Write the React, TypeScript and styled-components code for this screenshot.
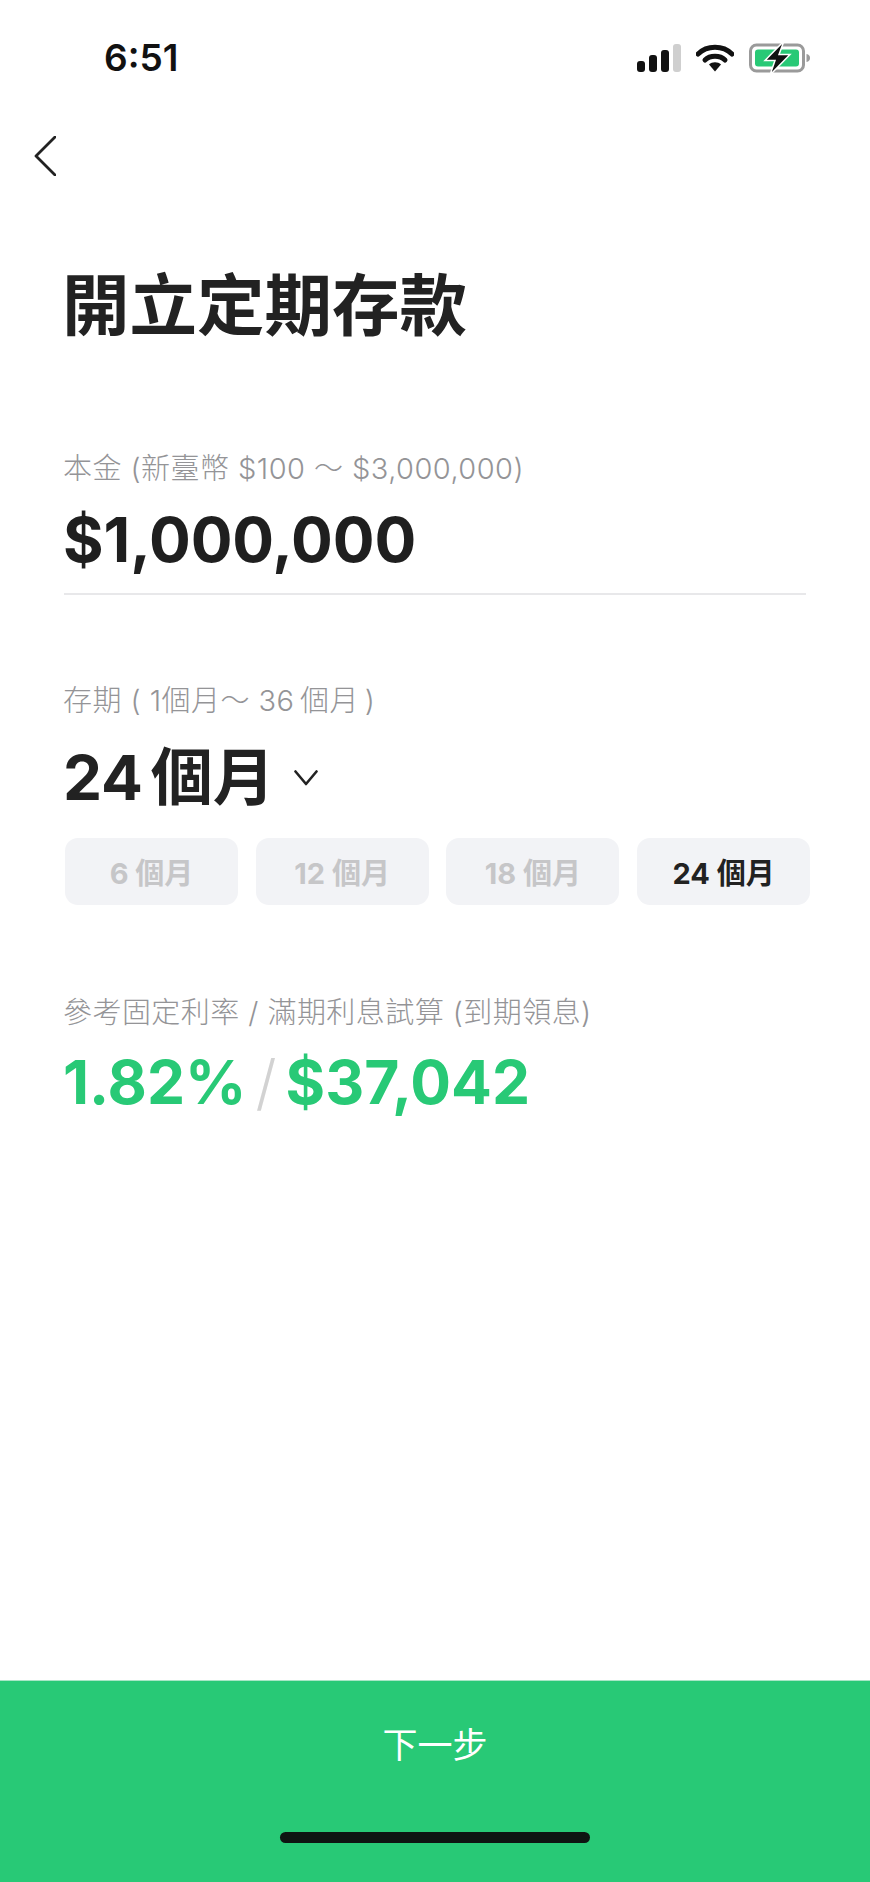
import styled, { createGlobalStyle } from "styled-components";

const GlobalStyle = createGlobalStyle`
  html, body {
    margin: 0;
    padding: 0;
    background: #fff;
  }
  * {
    box-sizing: border-box;
  }
`;

const fontStack = `Inter, "Noto Sans CJK TC", sans-serif`;

const Page = styled.div`
  width: 870px;
  height: 1882px;
  display: flex;
  flex-direction: column;
  font-family: ${fontStack};
  color: #222;
  background: #fff;
`;

const StatusBar = styled.div`
  height: 116px;
  padding: 36px 0 0 104px;
  display: flex;
  justify-content: space-between;
  align-items: flex-start;
`;

const Time = styled.div`
  font-size: 37px;
  line-height: 44px;
  font-weight: 600;
  color: #111;
`;

const StatusIcons = styled.div`
  display: flex;
  align-items: center;
  gap: 15px;
  padding: 5px 59px 0 0;
`;

const BackRow = styled.div`
  height: 76px;
  padding: 20px 0 0 34px;
`;

const Content = styled.div`
  padding: 0 0 0 64px;
`;

const Title = styled.h1`
  margin: 69px 0 1px -2px;
  font-size: 67.5px;
  line-height: 90px;
  font-weight: 700;
  color: #222;
`;

const Label = styled.div<{ $top: number }>`
  margin: ${(props) => props.$top}px 0 0 -1px;
  font-size: 29px;
  line-height: 36px;
  font-weight: 300;
  letter-spacing: 0.45px;
  color: #949497;
`;

const Amount = styled.div`
  margin: 13px 0 0 -1px;
  font-size: 62px;
  line-height: 80px;
  font-weight: 700;
  letter-spacing: -0.1px;
  color: #1f1f1f;
`;

const Divider = styled.div`
  width: 742px;
  height: 2px;
  margin-top: 13px;
  background: #e8e8ea;
`;

const TermRow = styled.div`
  margin: 17px 0 0 -1px;
  display: flex;
  align-items: center;
  gap: 19px;
  font-size: 62px;
  line-height: 84px;
  font-weight: 700;
  word-spacing: -7px;
  color: #222;
`;

const Options = styled.div`
  margin: 18px 0 0 1px;
  display: grid;
  grid-template-columns: repeat(4, 173px);
  column-gap: 17.7px;
`;

const Option = styled.button<{ $active?: boolean }>`
  height: 67px;
  border: none;
  border-radius: 13px;
  padding: 0 0 2px;
  background: #f2f3f6;
  font-family: ${fontStack};
  font-size: 29px;
  font-weight: 700;
  color: ${(props) => (props.$active ? "#222" : "#c6c6c8")};
`;

const Result = styled.div`
  margin: 11px 0 0 -1px;
  display: flex;
  align-items: center;
  font-size: 60.5px;
  line-height: 80px;
  font-weight: 700;
  color: #28c976;
`;

const Slash = styled.span`
  margin: 0 9px;
  font-weight: 300;
  color: #d2d2d2;
`;

const Footer = styled.div`
  margin-top: auto;
  height: 202px;
  padding-top: 42px;
  display: flex;
  flex-direction: column;
  align-items: center;
  background: #28c976;
  border-top: 1px solid #a8e6c6;
`;

const NextLabel = styled.div`
  font-size: 35px;
  line-height: 44px;
  font-weight: 400;
  color: #fff;
`;

const HomeBar = styled.div`
  width: 310px;
  height: 11px;
  margin-top: 65px;
  border-radius: 6px;
  background: #0e1512;
`;

function SignalIcon() {
  return (
    <svg width="44" height="28" viewBox="0 0 44 28">
      <rect x="0" y="17" width="8" height="11" rx="3" fill="#111" />
      <rect x="12" y="11" width="8" height="17" rx="3" fill="#111" />
      <rect x="24" y="6" width="8" height="22" rx="3" fill="#111" />
      <rect x="36" y="0" width="8" height="28" rx="3" fill="#cfcfcf" />
    </svg>
  );
}

function WifiIcon() {
  return (
    <svg width="38" height="28" viewBox="0 0 38 28">
      <path d="M2 10C11 1 27 1 36 10" fill="none" stroke="#111" strokeWidth="5" strokeLinecap="round" />
      <path d="M9 16C14 11 24 11 29 16" fill="none" stroke="#111" strokeWidth="5" strokeLinecap="round" />
      <path d="M13 20.5C16 17.5 22 17.5 25 20.5L19 27.5Z" fill="#111" />
    </svg>
  );
}

function BatteryIcon() {
  return (
    <svg width="62" height="34" viewBox="0 0 62 34">
      <rect x="1.5" y="4" width="53" height="26" rx="6" fill="none" stroke="#9a9a9a" strokeWidth="3" />
      <rect x="6" y="8.5" width="44" height="17" rx="3" fill="#28c976" />
      <path d="M57.5 13C60 13.5 61 15 61 17C61 19 60 20.5 57.5 21Z" fill="#9a9a9a" />
      <path d="M35 0L16 19.5H26L21 34L41 13.5H30Z" fill="#111" stroke="#fff" strokeWidth="1.5" />
    </svg>
  );
}

function BackIcon() {
  return (
    <svg width="22" height="40" viewBox="0 0 22 40">
      <path d="M21 1L2 20L21 39" fill="none" stroke="#222" strokeWidth="2.8" strokeLinecap="round" strokeLinejoin="round" />
    </svg>
  );
}

function ChevronDown() {
  return (
    <svg width="24" height="16" viewBox="0 0 24 16">
      <path d="M1.5 1.5L12 14L22.5 1.5" fill="none" stroke="#222" strokeWidth="2.6" strokeLinecap="round" strokeLinejoin="round" />
    </svg>
  );
}

const terms = [
  { text: "6 個月" },
  { text: "12 個月" },
  { text: "18 個月" },
  { text: "24 個月", active: true },
];

function App() {
  return (
    <Page>
      <GlobalStyle />
      <StatusBar>
        <Time>6:51</Time>
        <StatusIcons>
          <SignalIcon />
          <WifiIcon />
          <BatteryIcon />
        </StatusIcons>
      </StatusBar>
      <BackRow>
        <BackIcon />
      </BackRow>
      <Content>
        <Title>開立定期存款</Title>
        <Label $top={100}>本金 (新臺幣 $100 ～ $3,000,000)</Label>
        <Amount>$1,000,000</Amount>
        <Divider />
        <Label $top={88}>{"存期 ( 1個月～ 36\u2009個月\u2009)"}</Label>
        <TermRow>
          24 個月
          <ChevronDown />
        </TermRow>
        <Options>
          {terms.map((term) => (
            <Option key={term.text} $active={term.active}>
              {term.text}
            </Option>
          ))}
        </Options>
        <Label $top={90}>參考固定利率 / 滿期利息試算 (到期領息)</Label>
        <Result>
          1.82%
          <Slash>/</Slash>
          $37,042
        </Result>
      </Content>
      <Footer>
        <NextLabel>下一步</NextLabel>
        <HomeBar />
      </Footer>
    </Page>
  );
}

export default App;
